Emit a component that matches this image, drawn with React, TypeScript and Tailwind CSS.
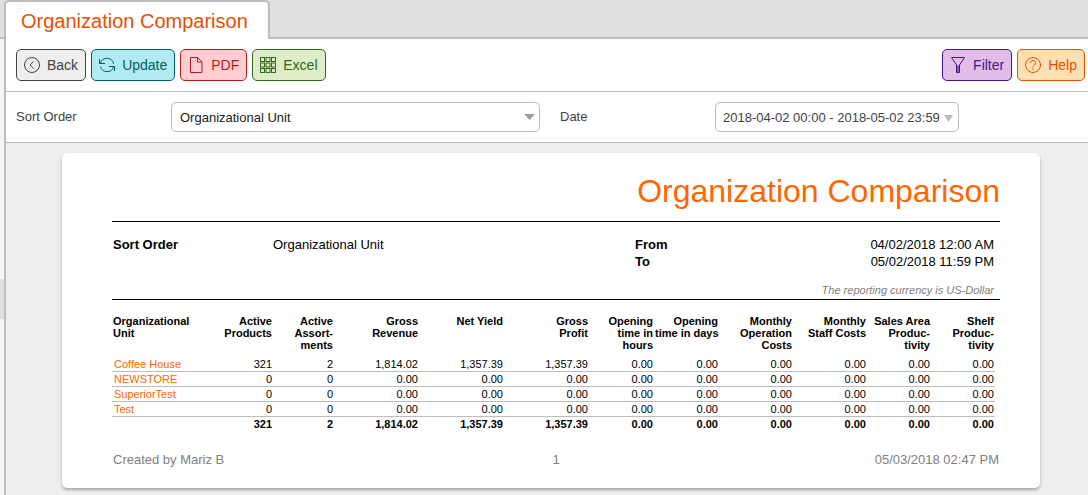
import { useState } from "react";
import type { ReactNode } from "react";
import clsx from "clsx";

type ReportRow = {
  name: string;
  values: string[];
};

const ZERO = "0.00";

const COLUMNS = [
  { label: "Organizational\nUnit", width: "w-[100px]" },
  { label: "Active\nProducts", width: "w-[61px]" },
  { label: "Active\nAssort-\nments", width: "w-[61px]" },
  { label: "Gross\nRevenue", width: "w-[85px]" },
  { label: "Net Yield", width: "w-[85px]" },
  { label: "Gross\nProfit", width: "w-[85px]" },
  { label: "Opening\ntime in\nhours", width: "w-[65px]" },
  { label: "Opening\ntime in days", width: "w-[65px]" },
  { label: "Monthly\nOperation\nCosts", width: "w-[74px]" },
  { label: "Monthly\nStaff Costs", width: "w-[74px]" },
  { label: "Sales Area\nProduc-\ntivity", width: "w-[64px]" },
  { label: "Shelf\nProduc-\ntivity", width: "w-[64px]" },
];

const EMPTY_VALUES = ["0", "0", ZERO, ZERO, ZERO, ZERO, ZERO, ZERO, ZERO, ZERO, ZERO];
const TOTALS = ["321", "2", "1,814.02", "1,357.39", "1,357.39", ZERO, ZERO, ZERO, ZERO, ZERO, ZERO];

const ROWS: ReportRow[] = [
  { name: "Coffee House", values: TOTALS },
  { name: "NEWSTORE", values: EMPTY_VALUES },
  { name: "SuperiorTest", values: EMPTY_VALUES },
  { name: "Test", values: EMPTY_VALUES },
];

function Icon({ children }: { children: ReactNode }) {
  return (
    <svg
      className="size-4 shrink-0"
      viewBox="0 0 16 16"
      fill="none"
      stroke="currentColor"
      strokeWidth="1"
      aria-hidden="true"
    >
      {children}
    </svg>
  );
}

function BackIcon() {
  return (
    <Icon>
      <circle cx="8" cy="8" r="7.5" />
      <path d="M9.5 4.5 6 8l3.5 3.5" />
    </Icon>
  );
}

function UpdateIcon() {
  return (
    <Icon>
      <path d="M1.4 6.2A6.8 6.8 0 0 1 14.6 6.8M14.6 9.8A6.8 6.8 0 0 1 1.5 9.5" />
      <path d="M.5 2v4.5H6M15.5 14V9.5H10" />
    </Icon>
  );
}

function PdfIcon() {
  return (
    <Icon>
      <path d="M2.5.5h7l4.500 4.500v10.500h-11.500zM9.500.5v4.500h4.500" />
    </Icon>
  );
}

function ExcelIcon() {
  return (
    <Icon>
      {[0.5, 6, 11.5].map((y) =>
        [0.5, 6, 11.5].map((x) => (
          <rect key={`${x}-${y}`} x={x} y={y} width="4" height="4" />
        ))
      )}
    </Icon>
  );
}

function FilterIcon() {
  return (
    <Icon>
      <path d="M1.5.5h13L9.5 8v7.5h-3V8z" />
      <path d="M8 8.5v7" strokeWidth="2" strokeOpacity="0.6" />
    </Icon>
  );
}

function HelpIcon() {
  return (
    <Icon>
      <circle cx="8" cy="8" r="7.5" />
      <path d="M5.5 6a2.500 2.500 0 1 1 4 2C8.500 8.700 8 9 8 10.500M8 11.500v1.500" />
    </Icon>
  );
}

function ToolbarButton({
  icon,
  label,
  className,
}: {
  icon: ReactNode;
  label: string;
  className: string;
}) {
  return (
    <button
      type="button"
      className={clsx(
        "flex h-8 items-center gap-[7px] rounded-[5px] border px-[7px] text-sm",
        className
      )}
    >
      {icon}
      {label}
    </button>
  );
}

function Toolbar() {
  return (
    <div className="flex items-center justify-between border-b border-[#bdbdbd] bg-white py-2.5 pr-[3px] pl-2.5">
      <div className="flex gap-[5px]">
        <ToolbarButton
          icon={<BackIcon />}
          label="Back"
          className="border-[#424242] bg-[#eeeeee] text-[#424242]"
        />
        <ToolbarButton
          icon={<UpdateIcon />}
          label="Update"
          className="border-[#006064] bg-[#b2ebf2] text-[#006064]"
        />
        <ToolbarButton
          icon={<PdfIcon />}
          label="PDF"
          className="border-[#b71c1c] bg-[#ffcdd2] text-[#b71c1c]"
        />
        <ToolbarButton
          icon={<ExcelIcon />}
          label="Excel"
          className="border-[#33691e] bg-[#dcedc8] text-[#33691e]"
        />
      </div>
      <div className="flex gap-[5px]">
        <ToolbarButton
          icon={<FilterIcon />}
          label="Filter"
          className="border-[#4a148c] bg-[#e1bee7] text-[#4a148c]"
        />
        <ToolbarButton
          icon={<HelpIcon />}
          label="Help"
          className="border-[#e65100] bg-[#ffe0b2] text-[#e65100]"
        />
      </div>
    </div>
  );
}

function FilterBar() {
  const [sortOrder, setSortOrder] = useState("unit");

  return (
    <div className="flex items-center gap-5 border-b border-[#bdbdbd] bg-white px-2.5 py-2.5 text-[13px] text-[#424242]">
      <div className="flex items-center">
        <label htmlFor="sort-order" className="w-[155px]">
          Sort Order
        </label>
        <div className="relative">
          <select
            id="sort-order"
            value={sortOrder}
            onChange={(e) => setSortOrder(e.target.value)}
            className="h-[30px] w-[369px] appearance-none rounded-[5px] border border-[#bdbdbd] bg-white px-2 pt-0.5 text-[#212121]"
          >
            <option value="unit">Organizational Unit</option>
          </select>
          <svg
            className="pointer-events-none absolute top-3 right-[5px] h-[6px] w-[11px] fill-[#9e9e9e]"
            viewBox="0 0 11 6"
            aria-hidden="true"
          >
            <path d="M0 0h11L5.5 6z" />
          </svg>
        </div>
      </div>
      <div className="flex items-center">
        <label htmlFor="date-range" className="w-[155px]">
          Date
        </label>
        <button
          id="date-range"
          type="button"
          className="flex h-[30px] w-[244px] items-center justify-between rounded-[5px] border border-[#bdbdbd] bg-white pt-0.5 pr-[5px] pl-[7px] whitespace-nowrap"
        >
          2018-04-02 00:00 - 2018-05-02 23:59
          <svg className="h-[7px] w-[9px] shrink-0 fill-[#bdbdbd]" viewBox="0 0 9 7" aria-hidden="true">
            <path d="M0 0h9L4.5 7z" />
          </svg>
        </button>
      </div>
    </div>
  );
}

function ReportTable() {
  return (
    <table className="w-full table-fixed text-right text-[11px] leading-[14px]">
      <colgroup>
        {COLUMNS.map((column) => (
          <col key={column.label} className={column.width} />
        ))}
      </colgroup>
      <thead>
        <tr>
          {COLUMNS.map((column, i) => (
            <th
              key={column.label}
              scope="col"
              className={clsx(
                "px-px pb-1.5 align-top leading-3 whitespace-pre",
                i === 0 ? "text-left" : "text-right"
              )}
            >
              {column.label}
            </th>
          ))}
        </tr>
      </thead>
      <tbody>
        {ROWS.map((row) => (
          <tr key={row.name} className="border-b border-[#bdbdbd]">
            <td className="px-0.5 text-left">
              <a href="#" className="text-[#ff6600]">
                {row.name}
              </a>
            </td>
            {row.values.map((value, i) => (
              <td key={i} className="pr-px">
                {value}
              </td>
            ))}
          </tr>
        ))}
      </tbody>
      <tfoot>
        <tr className="font-bold">
          <td />
          {TOTALS.map((value, i) => (
            <td key={i} className="pr-px">
              {value}
            </td>
          ))}
        </tr>
      </tfoot>
    </table>
  );
}

function Report() {
  return (
    <article className="rounded-[5px] bg-white pt-[18px] pr-10 pb-5 pl-[50px] text-[13px] leading-[17px] text-black shadow-[0_2px_3px_rgba(0,0,0,0.3)]">
      <h2 className="pb-2.5 text-right text-[32px] leading-10 text-[#ff6600]">
        Organization Comparison
      </h2>
      <div className="border-y border-black pt-3.5 pr-1.5 pl-px">
        <div className="flex">
          <dl className="flex w-[522px]">
            <dt className="w-40 font-bold">Sort Order</dt>
            <dd>Organizational Unit</dd>
          </dl>
          <dl className="grid flex-1 grid-cols-2">
            <dt className="font-bold">From</dt>
            <dd className="text-right">04/02/2018 12:00 AM</dd>
            <dt className="font-bold">To</dt>
            <dd className="text-right">05/02/2018 11:59 PM</dd>
          </dl>
        </div>
        <p className="pt-3 text-right text-[11px] text-[#808080] italic">
          The reporting currency is US-Dollar
        </p>
      </div>
      <div className="pt-[15px] pr-[5px]">
        <ReportTable />
      </div>
      <footer className="grid grid-cols-3 pt-5 pr-px pl-px text-[#808080]">
        <span>Created by Mariz B</span>
        <span className="text-center">1</span>
        <span className="text-right">05/03/2018 02:47 PM</span>
      </footer>
    </article>
  );
}

function App() {
  return (
    <div className="flex min-h-screen bg-[#eeeeee] font-['Liberation_Sans',Arial,sans-serif]">
      {/* Collapsed side menu with its drag handle */}
      <aside className="flex w-1 shrink-0 flex-col bg-[#f5f5f5]">
        <div className="h-[39px] border-b-2 border-[#bdbdbd] bg-[#dfe1e0]" />
        <div className="mt-60 h-10 bg-[#dfe1e0]" />
      </aside>

      <div className="flex min-w-0 flex-1 flex-col">
        <header className="flex bg-[#dfe1e0]">
          <h1 className="h-[39px] rounded-t-[5px] border-2 border-b-0 border-[#bdbdbd] bg-white pr-5 pl-[15px] text-xl leading-[38px] text-[#e65100]">
            Organization Comparison
          </h1>
          <div className="flex-1 border-b-2 border-[#bdbdbd]" />
        </header>
        <main className="flex-1 border-l-2 border-[#bdbdbd]">
          <Toolbar />
          <FilterBar />
          <div className="pt-2.5 pr-12 pb-1.5 pl-14">
            <Report />
          </div>
        </main>
      </div>
    </div>
  );
}

export default App;
